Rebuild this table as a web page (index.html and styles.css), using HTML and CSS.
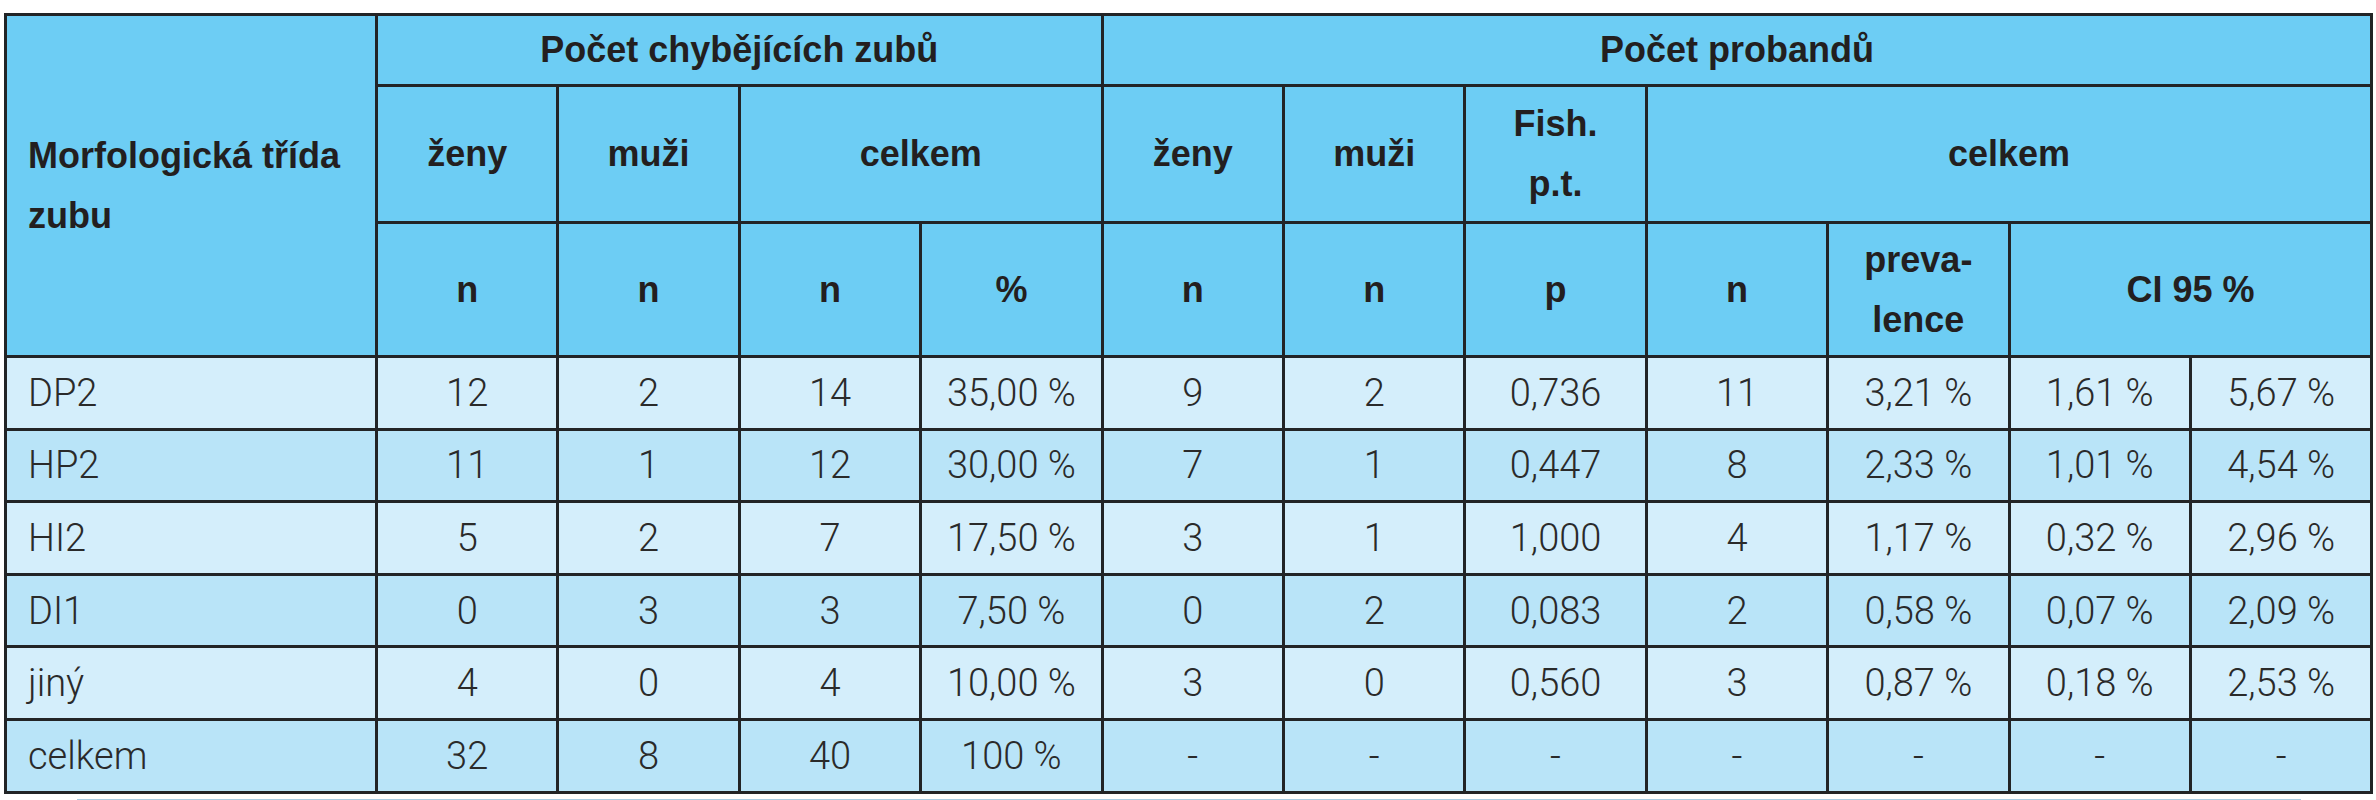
FILE: index.html
```html
<!DOCTYPE html>
<html lang="cs">
<head>
<meta charset="utf-8">
<title>Tabulka</title>
<link rel="stylesheet" href="styles.css">
</head>
<body>
<div class="page">
<table class="data">
  <colgroup>
    <col class="c-first">
    <col class="c"><col class="c"><col class="c"><col class="c"><col class="c"><col class="c">
    <col class="c"><col class="c"><col class="c"><col class="c"><col class="c">
  </colgroup>
  <thead>
    <tr class="h1">
      <th rowspan="3" class="left">Morfologická třída<br>zubu</th>
      <th colspan="4">Počet chybějících zubů</th>
      <th colspan="7">Počet probandů</th>
    </tr>
    <tr class="h2">
      <th>ženy</th>
      <th>muži</th>
      <th colspan="2">celkem</th>
      <th>ženy</th>
      <th>muži</th>
      <th>Fish.<br>p.t.</th>
      <th colspan="4">celkem</th>
    </tr>
    <tr class="h3">
      <th>n</th>
      <th>n</th>
      <th>n</th>
      <th>%</th>
      <th>n</th>
      <th>n</th>
      <th>p</th>
      <th>n</th>
      <th>preva-<br>lence</th>
      <th colspan="2">CI 95 %</th>
    </tr>
  </thead>
  <tbody>
    <tr class="odd">
      <td class="left">DP2</td><td>12</td><td>2</td><td>14</td><td>35,00 %</td><td>9</td><td>2</td><td>0,736</td><td>11</td><td>3,21 %</td><td>1,61 %</td><td>5,67 %</td>
    </tr>
    <tr class="even">
      <td class="left">HP2</td><td>11</td><td>1</td><td>12</td><td>30,00 %</td><td>7</td><td>1</td><td>0,447</td><td>8</td><td>2,33 %</td><td>1,01 %</td><td>4,54 %</td>
    </tr>
    <tr class="odd">
      <td class="left">HI2</td><td>5</td><td>2</td><td>7</td><td>17,50 %</td><td>3</td><td>1</td><td>1,000</td><td>4</td><td>1,17 %</td><td>0,32 %</td><td>2,96 %</td>
    </tr>
    <tr class="even">
      <td class="left">DI1</td><td>0</td><td>3</td><td>3</td><td>7,50 %</td><td>0</td><td>2</td><td>0,083</td><td>2</td><td>0,58 %</td><td>0,07 %</td><td>2,09 %</td>
    </tr>
    <tr class="odd">
      <td class="left">jiný</td><td>4</td><td>0</td><td>4</td><td>10,00 %</td><td>3</td><td>0</td><td>0,560</td><td>3</td><td>0,87 %</td><td>0,18 %</td><td>2,53 %</td>
    </tr>
    <tr class="even">
      <td class="left">celkem</td><td>32</td><td>8</td><td>40</td><td>100 %</td><td>-</td><td>-</td><td>-</td><td>-</td><td>-</td><td>-</td><td>-</td>
    </tr>
  </tbody>
</table>
<div class="strip"></div>
</div>
</body>
</html>
```

FILE: styles.css
```css
html, body {
  margin: 0;
  padding: 0;
  background: #ffffff;
}

.page {
  padding: 13px 0 0 4px;
}

.data {
  border-collapse: collapse;
  table-layout: fixed;
  width: 2366px;
  font-family: "Liberation Sans", Arial, sans-serif;
  color: #231f20;
}

.c-first { width: 371px; }
.c { width: 181.4px; }

.data th,
.data td {
  border: 3px solid #222426;
  text-align: center;
  vertical-align: middle;
  padding: 0 8px;
}

.data th {
  background: #6dcdf4;
  font-weight: bold;
  font-size: 36px;
  line-height: 60px;
}

.data th.left,
.data td.left {
  text-align: left;
  padding-left: 21px;
}

.h1 { height: 71px; }
.h2 { height: 137px; }
.h3 { height: 134px; }

.data td {
  font-family: "Roboto", "Liberation Sans", sans-serif;
  font-weight: 300;
  font-size: 38px;
  line-height: 40px;
  color: #2a2a2a;
  height: 69.6px;
}

.data tr.odd td { background: #d4eefb; }
.data tr.even td { background: #b9e4f8; }

.strip {
  margin: 5px 0 0 73px;
  width: 2224px;
  height: 4px;
  background: #a6cbe2;
}
```
